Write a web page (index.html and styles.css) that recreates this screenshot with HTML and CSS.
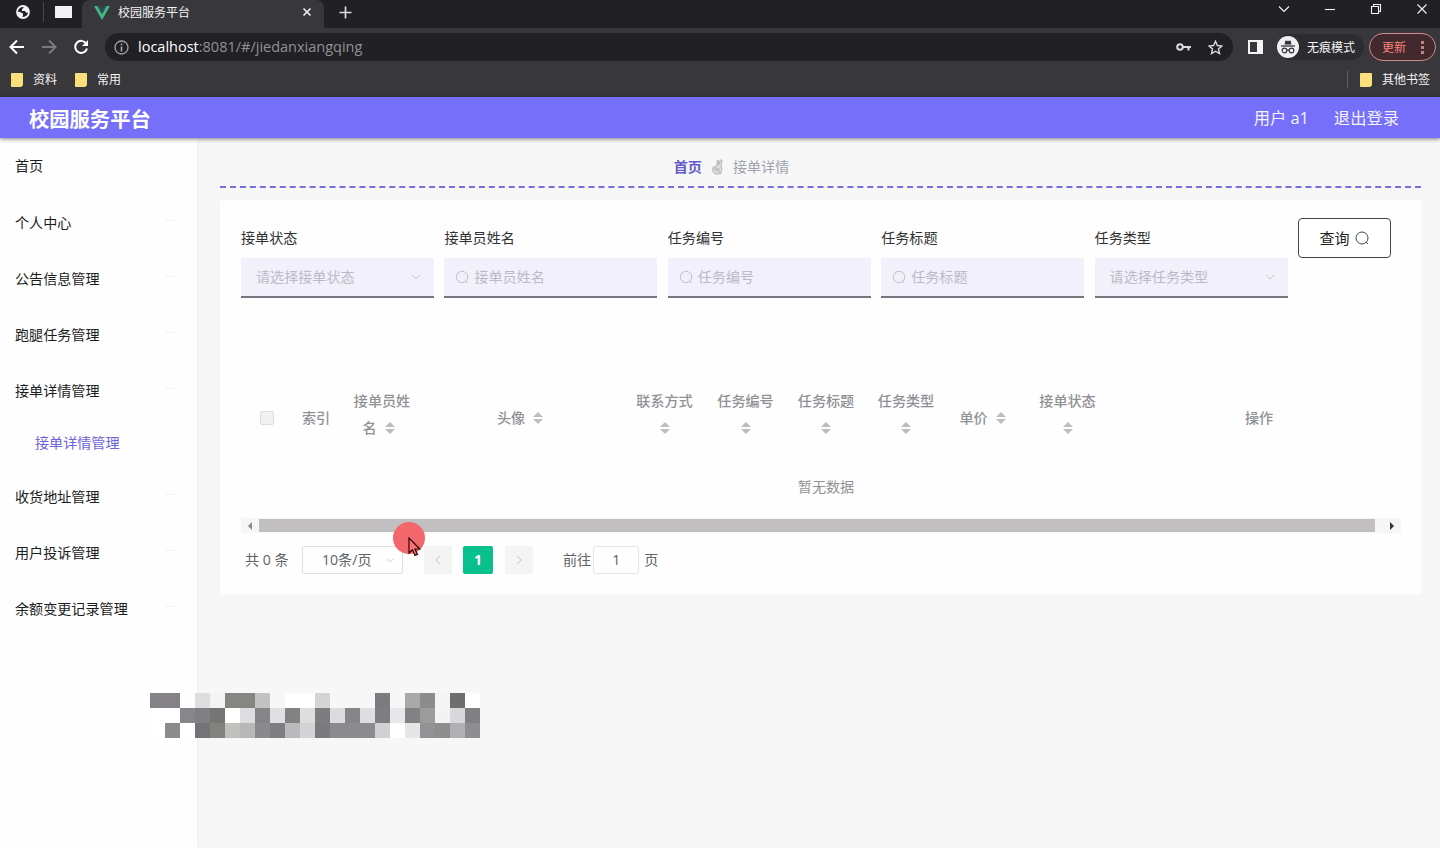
FILE: index.html
```html
<!DOCTYPE html>
<html lang="zh-CN">
<head>
  <meta charset="UTF-8">
  <meta name="viewport" content="width=device-width, initial-scale=1.0">
  <title>校园服务平台</title>
  <link rel="stylesheet" href="styles.css">
</head>
<body>
  <div class="browser">
    <div class="tabs">
      <div class="pinned">
        <svg width="16" height="16" viewBox="0 0 16 16"><circle cx="8" cy="8" r="6" fill="none" stroke="#f4f4f4" stroke-width="1.800"/><path d="M8.500 2l4 1.500L14 8l-2.500 1-1.500-2H7V5l1.500-1zM2 7.500l3 .5 3 1.500v2L7 14l-3-1.500z" fill="#f4f4f4"/></svg>
        <span class="pin-line"></span>
        <span class="pin-page"></span>
      </div>
      <div class="tab">
        <svg width="16" height="15" viewBox="0 0 16 15"><path d="M0 1h3.500L8 9l4.500-8H16L8 15z" fill="#41b883"/><path d="M3.500 1h3L8 3.500 9.500 1h3L8 9z" fill="#35495e"/></svg>
        <span class="tab-title">校园服务平台</span>
        <svg class="tab-close" width="10" height="10" viewBox="0 0 10 10"><path d="M1.500 1.500l7 7M8.500 1.500l-7 7" stroke="#f0f0f0" stroke-width="1.600"/></svg>
      </div>
      <svg class="tab-new" width="13" height="13" viewBox="0 0 13 13"><path d="M6.500 .5v12M.5 6.500h12" stroke="#dedede" stroke-width="1.700"/></svg>
      <div class="win">
        <svg width="12" height="12" viewBox="0 0 12 12"><path d="M1 3.500l5 5 5-5"/></svg>
        <svg width="12" height="12" viewBox="0 0 12 12"><path d="M1 6.500h10"/></svg>
        <svg width="12" height="12" viewBox="0 0 12 12"><path d="M1.500 3.500h7v7h-7zM3.500 3.500v-2h7v7h-2"/></svg>
        <svg width="12" height="12" viewBox="0 0 12 12"><path d="M1.500 1.500l9 9M10.500 1.500l-9 9"/></svg>
      </div>
    </div>
    <div class="toolbar">
      <svg class="nav" width="16" height="16" viewBox="0 0 16 16"><path d="M15 8H2M8 1.500L1.500 8 8 14.500"/></svg>
      <svg class="nav off" width="16" height="16" viewBox="0 0 16 16"><path d="M1 8h13M8 1.500L14.500 8 8 14.500"/></svg>
      <svg class="nav" width="16" height="16" viewBox="0 0 16 16"><path d="M13.200 4.500A6 6 0 1 0 14 9.500"/><path d="M15 1v6H9z" fill="#fff" stroke="none"/></svg>
      <div class="address">
        <svg width="15" height="15" viewBox="0 0 15 15" fill="none" stroke="#a5a5a8"><circle cx="7.500" cy="7.500" r="6.500" stroke-width="1.300"/><path d="M7.500 6.500v5M7.500 3.500v1.800" stroke-width="1.600"/></svg>
        <span class="url"><b>localhost</b>:8081/#/jiedanxiangqing</span>
        <svg class="key" width="15" height="10" viewBox="0 0 15 10" fill="none" stroke="#dcdcdc" stroke-width="2"><circle cx="4" cy="5" r="2.800"/><path d="M7 5h8M12.500 5v3.500"/></svg>
        <svg width="15" height="15" viewBox="0 0 15 15"><path d="M7.500 1.300l1.900 4.200 4.500.5-3.400 3 1 4.500-4-2.300-4 2.300 1-4.500-3.400-3 4.500-.5z" fill="none" stroke="#dcdcdc" stroke-width="1.400"/></svg>
      </div>
      <svg class="panel" width="15" height="14" viewBox="0 0 15 14"><path d="M1 1h13v12H1z" fill="none" stroke="#f4f4f4" stroke-width="2"/><path d="M9 1h5v12H9z" fill="#f4f4f4"/></svg>
      <div class="incognito">
        <svg width="22" height="22" viewBox="0 0 22 22"><circle cx="11" cy="11" r="11" fill="#f0f0f2"/><path d="M7.500 8.500L8.500 4.500l2.500.6 2.500-.6 1 4z" fill="#333338"/><path d="M4 10h14" stroke="#333338" stroke-width="1.300"/><g fill="none" stroke="#333338" stroke-width="1.200"><circle cx="7.500" cy="14.500" r="2.300"/><circle cx="14.500" cy="14.500" r="2.300"/><path d="M9.800 14h2.400"/></g></svg>
        <span>无痕模式</span>
      </div>
      <div class="update"><span>更新</span><i></i></div>
    </div>
    <div class="bookmarks">
      <span class="folder"></span><span class="mark">资料</span>
      <span class="folder"></span><span class="mark">常用</span>
      <span class="mark-line"></span>
      <span class="folder"></span><span>其他书签</span>
    </div>
  </div>

  <header class="header">
    <h1>校园服务平台</h1>
    <span class="user">用户 a1</span>
    <span>退出登录</span>
  </header>

  <div class="layout">
    <ul class="menu">
      <li class="home">首页</li>
      <li>个人中心<i></i></li>
      <li>公告信息管理<i></i></li>
      <li>跑腿任务管理<i></i></li>
      <li>接单详情管理<i></i></li>
      <li class="sub">接单详情管理</li>
      <li>收货地址管理<i></i></li>
      <li>用户投诉管理<i></i></li>
      <li>余额变更记录管理<i></i></li>
    </ul>

    <main class="main">
      <div class="crumb">
        <b>首页</b>
        <svg width="13" height="16" viewBox="0 0 13 16"><path d="M2 8l4-1V1.500q1-1 1.500 0V6L9.500 1q1.500-.8 1.700.5L10 7l1 3-1.500 5H4L1.500 12z" fill="#dcdedb" stroke="#b4b7b4"/><path d="M3 10h4v2M5 7.500v5M8 9v5" fill="none" stroke="#b4b7b4"/></svg>
        <span>接单详情</span>
      </div>

      <section class="card">
        <form class="search" onsubmit="return false">
          <div class="item select w193">
            <label>接单状态</label>
            <div class="box"><span>请选择接单状态</span><svg class="arrow" width="10" height="6" viewBox="0 0 10 6"><path d="M1 1l4 4 4-4"/></svg></div>
          </div>
          <div class="item w213">
            <label>接单员姓名</label>
            <div class="box"><svg class="glass" width="14" height="14" viewBox="0 0 14 14"><circle cx="7" cy="7" r="5.700"/><path d="M10.500 11l2 2"/></svg><span>接单员姓名</span></div>
          </div>
          <div class="item w203">
            <label>任务编号</label>
            <div class="box"><svg class="glass" width="14" height="14" viewBox="0 0 14 14"><circle cx="7" cy="7" r="5.700"/><path d="M10.500 11l2 2"/></svg><span>任务编号</span></div>
          </div>
          <div class="item w203">
            <label>任务标题</label>
            <div class="box"><svg class="glass" width="14" height="14" viewBox="0 0 14 14"><circle cx="7" cy="7" r="5.700"/><path d="M10.500 11l2 2"/></svg><span>任务标题</span></div>
          </div>
          <div class="item select w193">
            <label>任务类型</label>
            <div class="box"><span>请选择任务类型</span><svg class="arrow" width="10" height="6" viewBox="0 0 10 6"><path d="M1 1l4 4 4-4"/></svg></div>
          </div>
          <button type="submit">查询<svg class="glass" width="14" height="14" viewBox="0 0 14 14"><circle cx="7" cy="7" r="6"/><path d="M11 11l2 2"/></svg></button>
        </form>

        <div class="table">
          <div class="thead">
            <div class="one"><span class="check"></span></div>
            <div class="one">索引</div>
            <div class="two"><span>接单员姓</span><span class="name">名<i class="sort"></i></span></div>
            <div class="one">头像<i class="sort"></i></div>
            <div class="two"><span>联系方式</span><i class="sort"></i></div>
            <div class="two"><span>任务编号</span><i class="sort"></i></div>
            <div class="two"><span>任务标题</span><i class="sort"></i></div>
            <div class="two"><span>任务类型</span><i class="sort"></i></div>
            <div class="one price">单价<i class="sort"></i></div>
            <div class="two"><span>接单状态</span><i class="sort"></i></div>
            <div class="one">操作</div>
          </div>
          <div class="empty">暂无数据</div>
          <div class="scroll"><i class="left"></i><span></span><i class="right"></i></div>
        </div>

        <div class="pager">
          <span class="total">共 0 条</span>
          <div class="size">10条/页<svg class="arrow" width="8" height="5" viewBox="0 0 10 6"><path d="M1 1l4 4 4-4"/></svg></div>
          <div class="step"><svg class="arrow" width="6" height="10" viewBox="0 0 6 10"><path d="M5 1L1 5l4 4"/></svg></div>
          <div class="page">1</div>
          <div class="step"><svg class="arrow" width="6" height="10" viewBox="0 0 6 10"><path d="M1 1l4 4-4 4"/></svg></div>
          <span class="goto">前往</span>
          <div class="jump">1</div>
          <span>页</span>
        </div>
      </section>
    </main>
  </div>

  <div class="mosaic" id="mosaic"></div>
  <div class="pointer">
    <svg width="13" height="20" viewBox="0 0 13 20"><path d="M1 1v15l3.500-3.300L7 18.500l2.500-1.100L7 12h4.800z" fill="#fb7377" stroke="#2a0507" stroke-width="1.200"/></svg>
  </div>

  <script>
    // one grey per 15px block, '-' leaves the block empty
    const rows = [
      '848286 848286 - dedee0 f4f4f4 858581 858581 c2c2c4 - fff fff d4d4d6 - - - 7c7c80 - a9a9a9 8c8c8c f4f4f5 6e6e6e fff',
      'fff fff 87868a 807f84 757573 fff dedee0 858587 e0e0e2 828284 dededf 7d7d80 dcdcde 868689 dedee0 7e7e82 e8e8ea 828284 9c9c9c f3f3f5 d9d9db 808082',
      'fff 8b8b8b fff 737378 82827f c0c0bc b8b8b8 8a8a8c 7e7e80 bababc d3d3d5 7b7b7d 8b8b8d 8b8b8d 8b8b8d d1d1d3 fff e6e6e8 929294 8e8e8e b0b0b4 8e8e90'
    ];
    const mosaic = document.getElementById('mosaic');
    rows.join(' ').split(' ').forEach((c) => {
      const block = document.createElement('i');
      if (c !== '-') {
        block.style.background = '#' + c;
      }
      mosaic.appendChild(block);
    });
  </script>
</body>
</html>
```
FILE: styles.css
```css
* {
  box-sizing: border-box;
}

body {
  margin: 0;
  height: 848px;
  overflow: hidden;
  position: relative;
  display: flex;
  flex-direction: column;
  font-family: "Open Sans", "Noto Sans CJK SC", sans-serif;
  font-size: 14.1px;
  line-height: 20px;
  background: #f7f7f8;
}

svg {
  display: block;
  flex-shrink: 0;
}

/* browser */
.browser {
  height: 97px;
  flex-shrink: 0;
  background: #38373c;
  color: #f4f4f4;
  font-size: 12px;
}

.tabs {
  height: 28px;
  display: flex;
  background: #202025;
}

.pinned {
  width: 82px;
  padding: 0 11px 4px 15px;
  display: flex;
  align-items: center;
}

.pin-line {
  width: 1px;
  height: 20px;
  flex-shrink: 0;
  margin: 0 11px 0 12px;
  background: #4a4a4e;
}

.pin-page {
  width: 17px;
  height: 12px;
  flex-shrink: 0;
  background: #f3f1f3;
}

.tab {
  width: 242px;
  display: flex;
  align-items: center;
  padding: 0 12px 4px 12px;
  border-radius: 8px 8px 0 0;
  background: #38373c;
}

.tab-title {
  margin: 2px 0 0 8px;
  flex: 1;
}

.tab-new {
  margin: 6px 0 0 15px;
}

.win {
  margin-left: auto;
  padding: 3px 12px 0 0;
  display: flex;
  gap: 34px;
}

.win svg {
  fill: none;
  stroke: #f4f4f4;
  stroke-width: 1.1;
}

.toolbar {
  height: 38px;
  display: flex;
  align-items: center;
  padding-left: 9px;
}

.nav {
  margin-right: 16px;
  fill: none;
  stroke: #fff;
  stroke-width: 2;
}

.nav.off {
  stroke: #7b7b7f;
}

.address {
  width: 1128px;
  height: 28px;
  border-radius: 14px;
  background: #202025;
  display: flex;
  align-items: center;
  padding: 0 10px 0 9px;
}

.url {
  flex: 1;
  margin-left: 9px;
  font-size: 14.5px;
  color: #929296;
}

.url b {
  font-weight: normal;
  color: #fff;
}

.key {
  margin-right: 17px;
}

.panel {
  margin: 0 14px 0 15px;
}

.incognito {
  width: 87px;
  height: 26px;
  border-radius: 13px;
  background: #2b2b30;
  display: flex;
  align-items: center;
  gap: 8px;
  white-space: nowrap;
}

.incognito span,
.update span {
  margin-top: 2px;
}

.update {
  width: 67px;
  height: 28px;
  margin-left: 5px;
  border: 1px solid #d08c8c;
  border-radius: 14px;
  background: #42292d;
  color: #fa8078;
  display: flex;
  align-items: center;
  padding-left: 12px;
  gap: 15px;
}

.update i {
  width: 3px;
  height: 3px;
  margin-top: -10px;
  background: #bf8583;
  box-shadow: 0 5px #bf8583, 0 10px #bf8583;
}

.bookmarks {
  height: 27px;
  display: flex;
  align-items: center;
  padding: 0 10px 0 11px;
}

.folder {
  width: 12px;
  height: 14px;
  margin-right: 10px;
  border-radius: 1px 1px 3px 1px;
  background: #fcdf7c;
}

.mark {
  margin-right: 18px;
}

.mark-line {
  width: 1px;
  height: 17px;
  margin: 0 12px 0 auto;
  background: #606064;
}

/* header */
.header {
  height: 41px;
  flex-shrink: 0;
  position: relative;
  display: flex;
  align-items: center;
  padding: 1px 41px 0 29px;
  background: #766ffa;
  box-shadow: 0 1px 4px rgba(0, 0, 0, 0.5);
  color: #f3f2ff;
  font-size: 16.3px;
}

.header h1 {
  margin: 2px 0 0;
  flex: 1;
  font-size: 20.3px;
  color: #fff;
}

.user {
  margin-right: 25px;
}

.layout {
  flex: 1;
  display: flex;
}

/* side menu */
.menu {
  width: 197px;
  flex-shrink: 0;
  margin: 0;
  padding: 0;
  list-style: none;
  background: #fefefe;
  box-shadow: 0 0 6px rgba(0, 0, 0, 0.04);
}

.menu li {
  height: 56px;
  padding: 0 23px 0 15px;
  display: flex;
  align-items: center;
  justify-content: space-between;
  color: #1c1c1e;
}

.menu .home {
  height: 57px;
  padding-bottom: 2px;
}

.menu i {
  width: 9px;
  height: 1px;
  margin-top: -5px;
  background: #f1f1f8;
}

.menu .sub {
  height: 50px;
  padding: 0 0 2px 35px;
  color: #6f63dc;
}

/* content */
.main {
  flex: 1;
  min-width: 0;
  padding: 0 19px 0 23px;
}

.crumb {
  height: 50px;
  display: flex;
  justify-content: center;
  align-items: center;
  gap: 9px;
  padding: 10px 178px 0 0;
  border-bottom: 2px dashed #766fe0;
  color: #a0a3ab;
}

.crumb b {
  color: #6459cb;
}

.card {
  height: 394px;
  margin-top: 12px;
  padding: 18px 20px 0 21px;
  border-radius: 3px;
  background: #fefefe;
}

.search {
  display: flex;
  gap: 10.4px;
}

.item label {
  display: block;
  height: 40px;
  line-height: 40px;
  color: #303133;
}

.w193 {
  width: 193px;
}

.w203 {
  width: 203px;
}

.w213 {
  width: 213px;
}

.box {
  height: 40px;
  display: flex;
  align-items: center;
  gap: 5px;
  padding: 0 11px;
  background: #f2f0fb;
  border-bottom: 2px solid #77757d;
  color: #bcbac6;
}

.select .box {
  justify-content: space-between;
  padding: 0 13px 0 15px;
}

.arrow {
  fill: none;
  stroke: #c3c3cc;
}

.glass {
  fill: none;
  stroke: #c2c0cb;
}

.search button {
  width: 93px;
  height: 40px;
  display: flex;
  align-items: center;
  justify-content: center;
  gap: 6px;
  padding: 0;
  border: 1px solid #46464a;
  border-radius: 4px;
  background: #fff;
  color: #222;
  font: inherit;
  font-size: 15px;
}

.search button .glass {
  stroke: #444;
}

.table {
  margin-top: 78px;
  overflow: hidden;
}

.thead {
  width: 1169px;
  height: 77px;
  padding-left: 9px;
  display: grid;
  grid-template-columns: 34px 64px 68px 208px 81px 81px 80px 80px 81px 81px 302px;
  color: #909196;
  font-weight: 500;
}

.thead div,
.thead .two span {
  display: flex;
  align-items: center;
  justify-content: center;
}

.thead .one {
  padding-top: 7px;
}

.thead .price {
  padding-right: 8px;
}

.thead .two {
  flex-direction: column;
}

.thead .two span,
.two > .sort {
  height: 27px;
}

.thead .name {
  padding-right: 7px;
}

.check {
  width: 14px;
  height: 14px;
  border: 1px solid #dcdde2;
  border-radius: 2px;
  background: #f1f1f4;
}

.sort {
  width: 10px;
  height: 12px;
  margin-left: 8px;
  display: flex;
  flex-direction: column;
  justify-content: center;
  gap: 2px;
}

.two > .sort {
  margin-left: 0;
}

.sort::before,
.sort::after {
  content: "";
  border: 5px solid transparent;
  border-top: 0;
  border-bottom-color: #bcbdc1;
}

.sort::after {
  border-top: 5px solid #bcbdc1;
  border-bottom: 0;
}

.empty {
  height: 65px;
  display: flex;
  align-items: center;
  justify-content: center;
  padding: 2px 0 0 10px;
  color: #909196;
}

.scroll {
  height: 15px;
  display: flex;
  align-items: center;
  padding-left: 7px;
  background: #f6f6f7;
}

.scroll span {
  width: 1116px;
  height: 13px;
  margin: 0 15px 0 7px;
  background: #c1bfc0;
}

.scroll i {
  border: 4px solid transparent;
}

.scroll .left {
  border-left: 0;
  border-right-color: #88888c;
}

.scroll .right {
  border-right: 0;
  border-left-color: #333;
}

.pager {
  display: flex;
  align-items: center;
  margin-top: 13px;
  padding-left: 4px;
  color: #606266;
}

.total {
  width: 57px;
  white-space: nowrap;
}

.size {
  width: 101px;
  height: 28px;
  display: flex;
  align-items: center;
  justify-content: space-between;
  padding: 0 8px 0 19px;
  border: 1px solid #dfe0e4;
  border-radius: 2px;
}

.step {
  width: 28px;
  height: 28px;
  display: flex;
  align-items: center;
  justify-content: center;
  margin-left: 21px;
  border-radius: 2px;
  background: #f4f4f5;
}

.page {
  width: 30px;
  height: 28px;
  margin: 0 -9px 0 11px;
  border-radius: 2px;
  background: #07c08c;
  color: #fff;
  font-weight: bold;
  line-height: 28px;
  text-align: center;
}

.goto {
  margin-left: 30px;
}

.jump {
  width: 46px;
  height: 28px;
  margin: 0 5px 0 2px;
  border: 1px solid #e4e5e9;
  border-radius: 3px;
  line-height: 26px;
  text-align: center;
}

/* over the page */
.mosaic {
  position: absolute;
  left: 150px;
  top: 693px;
  display: grid;
  grid-template-columns: repeat(22, 15px);
  grid-auto-rows: 15px;
}

.pointer {
  position: absolute;
  left: 393px;
  top: 522px;
  width: 32px;
  height: 32px;
  padding: 15px 0 0 15px;
  border-radius: 50%;
  background: #f3666b;
}
```
